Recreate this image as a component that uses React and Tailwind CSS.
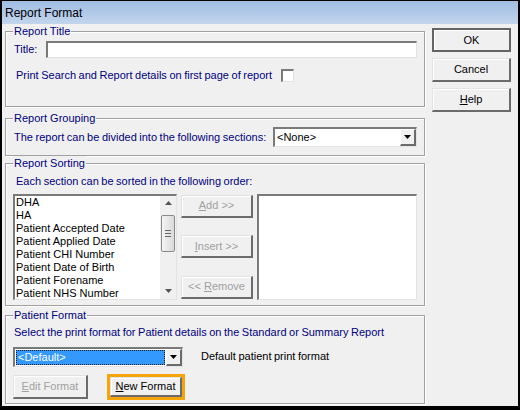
import React from 'react';

const font = { fontFamily: '"Liberation Sans", Arial, sans-serif' };

const sortFields = [
  'DHA',
  'HA',
  'Patient Accepted Date',
  'Patient Applied Date',
  'Patient CHI Number',
  'Patient Date of Birth',
  'Patient Forename',
  'Patient NHS Number',
];

function Group({ title, className, children }) {
  return (
    <fieldset className={`border border-[#a0a0a0] shadow-[inset_1px_1px_0_#fff,1px_1px_0_#fff] px-[7px] ${className}`}>
      <legend className="ml-0 px-px bg-[#f0f0f0] text-[11px] leading-[14px] text-[#000080]">{title}</legend>
      {children}
    </fieldset>
  );
}

function Button({ children, disabled, primary, className = '' }) {
  const frame = primary
    ? 'border-2 border-[#646464] shadow-[inset_1px_1px_0_#fff]'
    : 'border-t border-l border-r-2 border-b-2 border-t-[#e3e3e3] border-l-[#e3e3e3] border-r-[#6b6b6b] border-b-[#6b6b6b] shadow-[inset_1px_1px_0_#fff]';
  return (
    <div
      className={`flex items-center justify-center bg-[#f0f0f0] text-[11px] ${frame} ${
        disabled ? 'text-[#a0a0a0]' : 'text-black'
      } ${className}`}
    >
      {children}
    </div>
  );
}

function DropArrow() {
  return (
    <div className="w-[16px] self-stretch flex items-center justify-center bg-[#f0f0f0] border-t border-l border-r-2 border-b-2 border-t-white border-l-white border-r-[#6b6b6b] border-b-[#6b6b6b]">
      <svg width="7" height="4" viewBox="0 0 7 4">
        <path d="M0 0h7L3.5 4z" fill="#000" />
      </svg>
    </div>
  );
}

const sunken =
  'border-t-2 border-l-2 border-r border-b border-t-[#7a7a7a] border-l-[#7a7a7a] border-r-[#e3e3e3] border-b-[#e3e3e3]';

const label = 'text-[11px] text-[#000080] [word-spacing:-0.5px] whitespace-nowrap';

export default function App() {
  return (
    <div
      className="w-[520px] h-[410px] bg-black border-t border-l-2 border-r-2 border-b-4 border-black flex flex-col overflow-hidden"
      style={font}
    >
      <div className="h-[23px] shrink-0 flex items-center pl-[3px] bg-gradient-to-b from-[#9fbce2] to-[#c2d5ec] text-[12px] text-black">
        Report Format
      </div>

      <div className="flex-1 bg-[#f0f0f0] flex pl-[3px] pr-[7px]">
        <div className="w-[420px] flex flex-col">
          <Group title="Report Title" className="h-[83px]">
            <div className="flex items-center mt-[3px]">
              <span className={`${label} w-[33px] pl-px`}>Title:</span>
              <div className={`flex-1 h-[17px] bg-white ${sunken}`} />
            </div>
            <div className="flex items-center mt-[9px] pl-[3px]">
              <span className={label}>Print Search and Report details on first page of report</span>
              <div className={`ml-[9px] w-[13px] h-[13px] bg-white ${sunken}`} />
            </div>
          </Group>

          <Group title="Report Grouping" className="h-[45px] mt-[4px]">
            <div className="flex items-center justify-between mt-[2px]">
              <span className={`${label} pl-px`}>The report can be divided into the following sections:</span>
              <div className={`w-[144px] h-[20px] bg-white flex items-center ${sunken}`}>
                <span className="flex-1 pl-[2px] text-[11px] text-black">&lt;None&gt;</span>
                <DropArrow />
              </div>
            </div>
          </Group>

          <Group title="Report Sorting" className="h-[150px]">
            <div className={`${label} mt-[3px] pl-[3px]`}>
              Each section can be sorted in the following order:
            </div>
            <div className="flex gap-[4px] mt-[4px] h-[106px]">
              <div className={`w-[164px] bg-white flex ${sunken}`}>
                <div className="flex-1 overflow-hidden pl-px">
                  {sortFields.map((f) => (
                    <div key={f} className="h-[13px] leading-[13px] text-[11px] text-black whitespace-nowrap">
                      {f}
                    </div>
                  ))}
                </div>
                <div className="w-[16px] bg-[#f0f0f0] flex flex-col items-center">
                  <div className="h-[15px] flex items-center justify-center">
                    <svg width="7" height="4" viewBox="0 0 7 4">
                      <path d="M3.5 0L7 4H0z" fill="#555" />
                    </svg>
                  </div>
                  <div className="w-[14px] h-[37px] mt-[4px] rounded-[2px] border border-[#8a8a8a] bg-gradient-to-r from-[#f4f4f4] to-[#dadada] flex flex-col items-center justify-center gap-[2px]">
                    <div className="w-[6px] h-px bg-[#666]" />
                    <div className="w-[6px] h-px bg-[#666]" />
                    <div className="w-[6px] h-px bg-[#666]" />
                  </div>
                  <div className="flex-1" />
                  <div className="h-[15px] flex items-center justify-center">
                    <svg width="7" height="4" viewBox="0 0 7 4">
                      <path d="M0 0h7L3.5 4z" fill="#555" />
                    </svg>
                  </div>
                </div>
              </div>

              <div className="w-[72px] flex flex-col justify-between py-px">
                <Button disabled className="h-[23px]">
                  <span><u>A</u>dd &gt;&gt;</span>
                </Button>
                <Button disabled className="h-[23px]">
                  <span><u>I</u>nsert &gt;&gt;</span>
                </Button>
                <Button disabled className="h-[23px]">
                  <span>&lt;&lt; <u>R</u>emove</span>
                </Button>
              </div>

              <div className={`flex-1 bg-white ${sunken}`} />
            </div>
          </Group>

          <Group title="Patient Format" className="h-[96px] mt-[2px]">
            <div className={`${label} mt-[2px] pl-px`}>
              Select the print format for Patient details on the Standard or Summary Report
            </div>
            <div className="flex items-center mt-[6px]">
              <div className={`w-[170px] h-[20px] bg-white flex items-center ${sunken}`}>
                <div className="flex-1 self-stretch m-px bg-[#3399ff] border border-dotted border-[#1a1a1a] flex items-center pl-px text-[11px] text-white">
                  &lt;Default&gt;
                </div>
                <DropArrow />
              </div>
              <span className="ml-[18px] text-[11px] text-black [word-spacing:-0.5px]">Default patient print format</span>
            </div>
            <div className="flex items-center mt-[7px]">
              <Button disabled className="w-[75px] h-[24px]">
                <span><u>E</u>dit Format</span>
              </Button>
              <div className="ml-[19px] w-[78px] h-[26px] border-[3px] border-[#f5a50a]">
                <Button className="h-full">
                  <span><u>N</u>ew Format</span>
                </Button>
              </div>
            </div>
          </Group>
        </div>

        <div className="ml-[7px] flex-1 flex flex-col gap-[6px] pt-[4px]">
          <Button primary className="h-[24px]">OK</Button>
          <Button className="h-[24px]">Cancel</Button>
          <Button className="h-[24px]">
            <span><u>H</u>elp</span>
          </Button>
        </div>
      </div>
    </div>
  );
}
